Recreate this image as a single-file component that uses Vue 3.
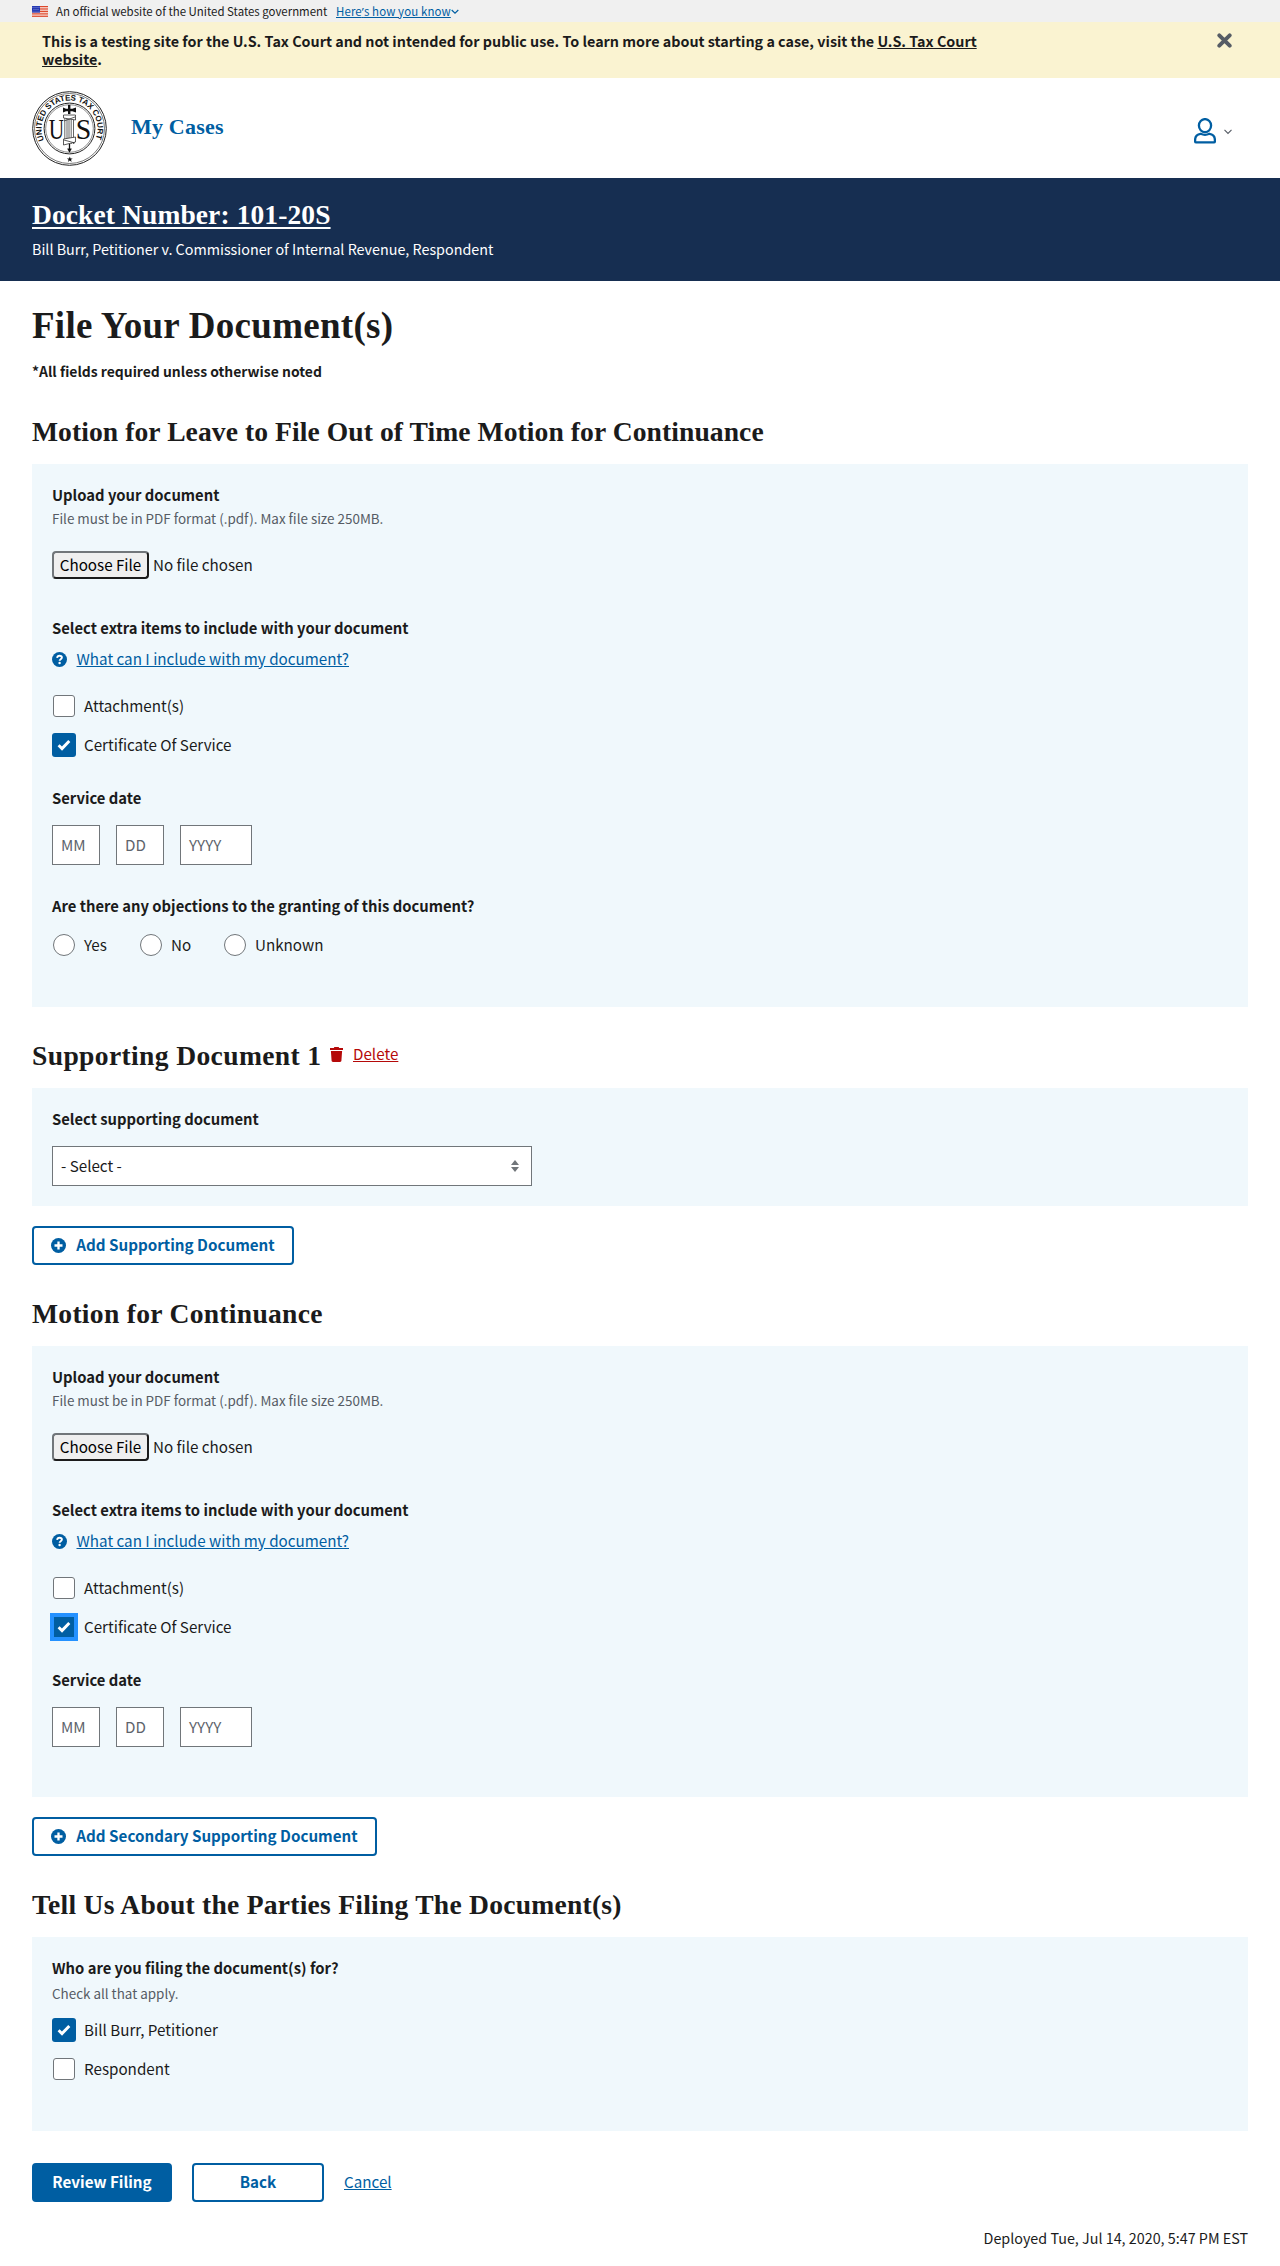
<script setup>
const groups = [
  {
    key: 'primary',
    title: 'Motion for Leave to File Out of Time Motion for Continuance',
    objections: true,
    focused: false,
    supporting: true,
    add: 'Add Supporting Document',
    addClass: 'add-first'
  },
  {
    key: 'secondary',
    title: 'Motion for Continuance',
    objections: false,
    focused: true,
    supporting: false,
    add: 'Add Secondary Supporting Document',
    addClass: 'add-second'
  }
]
const objectionOptions = ['Yes', 'No', 'Unknown']
const parties = [
  { name: 'Bill Burr, Petitioner', checked: true },
  { name: 'Respondent', checked: false }
]
const flagStripes = [0, 2, 4, 6, 8, 10, 12]
</script>

<template>
  <div class="page">
    <div class="gov">
      <svg class="flag" width="16" height="11" viewBox="0 0 16 11">
        <rect width="16" height="11" fill="#fff" />
        <rect v-for="s in flagStripes" :key="s" x="0" :y="s * 0.846" width="16" height="0.95" fill="#db3e1f" />
        <rect width="8" height="6.6" fill="#1e33b1" />
        <g fill="#fff">
          <circle v-for="n in 4" :key="'a' + n" :cx="n * 2 - 1" cy="1.3" r="0.45" />
          <circle v-for="n in 3" :key="'b' + n" :cx="n * 2" cy="3.2" r="0.45" />
          <circle v-for="n in 4" :key="'c' + n" :cx="n * 2 - 1" cy="5.1" r="0.45" />
        </g>
      </svg>
      <span class="gov-text">An official website of the United States government</span>
      <a class="gov-link">Here<span class="apos">’</span>s how you know</a>
      <svg class="gov-chev" width="8" height="6" viewBox="0 0 8 6"><path d="M.7 1 4 4.2 7.3 1" fill="none" stroke="#005ea2" stroke-width="1.2" /></svg>
    </div>

    <div class="notice">
      <p>This is a testing site for the U.S. Tax Court and not intended for public use. To learn more about starting a case, visit the <u>U.S. Tax Court</u><br /><u>website</u>.</p>
      <svg class="close" width="15" height="15" viewBox="0 0 15 15"><path d="M2.3 2.3 12.7 12.7M12.7 2.3 2.3 12.7" stroke="#565c65" stroke-width="3.9" stroke-linecap="round" /></svg>
    </div>

    <header class="header">
      <svg class="seal" width="75" height="75" viewBox="0 0 75 75">
        <defs><path id="seal-arc" d="M12 49A28 28 0 1 1 63 49" /></defs>
        <g fill="none" stroke="#222">
          <circle cx="37.5" cy="37.5" r="36.8" stroke-width="1" />
          <circle cx="37.5" cy="37.5" r="35" stroke-width=".6" />
          <circle cx="37.5" cy="37.5" r="25.4" stroke-width="1" />
          <circle cx="37.5" cy="37.5" r="23.8" stroke-width=".5" />
        </g>
        <text class="seal-ring"><textPath href="#seal-arc" textLength="110">UNITED STATES TAX COURT</textPath></text>
        <text class="seal-letter" x="16.8" y="47.6" textLength="15.500" lengthAdjust="spacingAndGlyphs">U</text>
        <text class="seal-letter" x="43.800" y="47.6" textLength="15.5" lengthAdjust="spacingAndGlyphs">S</text>
        <rect x="31.5" y="23" width="12" height="31" fill="#fff" />
        <path d="M32.8 25v28M35 25v28M37 25v28M39.2 25v28M41.5 25v28" stroke="#555" stroke-width=".9" />
        <path d="M31.5 24h12v5l-12-2zM31.5 48l12-2v5l-12 3zM32 30l11-4M32 49l11 3" fill="#fff" stroke="#333" stroke-width=".8" />
        <path d="M31 16.5l3 1.3h2V14h2.4v3.8h2l3.6-1.3v5l-3.6-1.2h-2V23H36v-2.7h-2l-3 1.2z" fill="#111" />
        <path d="M37.5 53v8M35.8 57.5l1.7 3 1.7-3" stroke="#111" stroke-width="1.3" fill="none" />
        <path d="M37.8 65.5l.8 2h2.1l-1.7 1.3.7 2.1-1.9-1.3-1.9 1.3.7-2.1-1.7-1.3H37z" fill="#111" />
      </svg>
      <a class="my-cases">My Cases</a>
      <svg class="user" width="22" height="26" viewBox="0 0 22 26">
        <g fill="none" stroke="#005ea2" stroke-width="2.3">
          <ellipse cx="11" cy="7.6" rx="6.1" ry="6.5" />
          <path d="M6.6 15.8C3 16.2 1.1 18.8 1.1 22v1.3c0 .7.5 1.1 1.1 1.1h17.6c.6 0 1.1-.4 1.1-1.1V22c0-3.2-1.9-5.8-5.5-6.2-2.6 1.2-6.2 1.2-8.8 0z" />
        </g>
      </svg>
      <svg class="user-chev" width="8" height="6" viewBox="0 0 8 6"><path d="M.5.8 4 4.5 7.5.8" fill="none" stroke="#565c65" stroke-width="1.1" /></svg>
    </header>

    <div class="case">
      <a class="docket">Docket Number: 101-20S</a>
      <p class="caption">Bill Burr, Petitioner v. Commissioner of Internal Revenue, Respondent</p>
    </div>

    <main class="main">
      <h1>File Your Document(s)</h1>
      <p class="required">*All fields required unless otherwise noted</p>

      <template v-for="g in groups" :key="g.key">
        <h2 :class="'h-' + g.key">{{ g.title }}</h2>
        <section class="panel">
          <div class="label">Upload your document</div>
          <div class="hint">File must be in PDF format (.pdf). Max file size 250MB.</div>
          <div class="file"><button class="choose">Choose File</button><span>No file chosen</span></div>
          <div class="label extra">Select extra items to include with your document</div>
          <div class="help">
            <svg width="15" height="15" viewBox="0 0 15 15">
              <circle cx="7.5" cy="7.5" r="7.5" fill="#005ea2" />
              <path d="M5.1 5.8C5.3 4.4 6.3 3.7 7.5 3.7c1.4 0 2.4.8 2.4 1.9 0 1.6-2.3 1.6-2.3 3.2" fill="none" stroke="#fff" stroke-width="1.9" />
              <circle cx="7.6" cy="11" r="1.2" fill="#fff" />
            </svg>
            <a>What can I include with my document?</a>
          </div>
          <div class="checks">
            <label class="option"><span class="box"></span><span class="text">Attachment(s)</span></label>
            <label class="option">
              <span class="box checked" :class="{ focused: g.focused }">
                <svg width="14" height="12" viewBox="0 0 14 12"><path d="M1.6 6.3 5 9.6 12.3 1.9" fill="none" stroke="#fff" stroke-width="2.9" /></svg>
              </span>
              <span class="text">Certificate Of Service</span>
            </label>
          </div>
          <div class="label service">Service date</div>
          <div class="dates">
            <span class="field">MM</span><span class="field">DD</span><span class="field year">YYYY</span>
          </div>
          <template v-if="g.objections">
            <div class="label objections">Are there any objections to the granting of this document?</div>
            <div class="radios">
              <label v-for="o in objectionOptions" :key="o" class="option" :class="'r-' + o.toLowerCase()"><span class="box round"></span><span class="text">{{ o }}</span></label>
            </div>
          </template>
        </section>

        <template v-if="g.supporting">
          <div class="h2-row">
            <h2 class="h-support">Supporting Document 1</h2>
            <svg class="trash" width="13" height="15" viewBox="0 0 13 15"><path d="M0 1.1h3.8L4.4 0h4.2l.6 1.1H13v1.8H0zM.9 3.9h11.2l-.7 9.9c-.1.7-.6 1.2-1.3 1.2H2.9c-.7 0-1.2-.5-1.3-1.2z" fill="#b50909" /></svg>
            <a class="delete">Delete</a>
          </div>
          <section class="panel short">
            <div class="label sel-label">Select supporting document</div>
            <div class="select">
              <span>- Select -</span>
              <svg width="8" height="12" viewBox="0 0 8 12"><path d="M4 0l4 5H0zM0 7h8l-4 5z" fill="#71767a" /></svg>
            </div>
          </section>
        </template>

        <button class="btn outline" :class="g.addClass">
          <svg width="15" height="15" viewBox="0 0 15 15"><circle cx="7.5" cy="7.5" r="7.5" fill="#005ea2" /><path d="M7.5 3.5v8M3.5 7.5h8" stroke="#fff" stroke-width="2.3" /></svg>
          <span>{{ g.add }}</span>
        </button>
      </template>

      <h2 class="h-parties">Tell Us About the Parties Filing The Document(s)</h2>
      <section class="panel parties">
        <div class="label">Who are you filing the document(s) for?</div>
        <div class="hint all">Check all that apply.</div>
        <div class="checks">
          <label v-for="p in parties" :key="p.name" class="option">
            <span class="box" :class="{ checked: p.checked }">
              <svg v-if="p.checked" width="14" height="12" viewBox="0 0 14 12"><path d="M1.6 6.3 5 9.6 12.3 1.9" fill="none" stroke="#fff" stroke-width="2.9" /></svg>
            </span>
            <span class="text">{{ p.name }}</span>
          </label>
        </div>
      </section>

      <div class="actions">
        <button class="btn solid"><span>Review Filing</span></button>
        <button class="btn outline back"><span>Back</span></button>
        <a class="cancel">Cancel</a>
      </div>
      <p class="deployed">Deployed Tue, Jul 14, 2020, 5:47 PM EST</p>
    </main>
  </div>
</template>

<style>
body { margin: 0; background: #fff; }
</style>

<style scoped>
.page {
  width: 1280px;
  height: 2266px;
  overflow: hidden;
  font-family: "Noto Sans CJK SC", "Open Sans", sans-serif;
  font-size: 15.2px;
  line-height: 20px;
  color: #1b1b1b;
  white-space: nowrap;
}
.page * { box-sizing: border-box; }
p, h1, h2 { margin: 0; }
button { font-family: inherit; margin: 0; }
svg { flex: none; display: block; }

.gov {
  height: 22px;
  padding: 0 32px;
  display: flex;
  align-items: center;
  background: #f0f0f0;
  font-size: 11.45px;
}
.flag { margin-top: 1px; }
.gov-text { margin-left: 8px; width: 280px; }
.gov-link { color: #005ea2; text-decoration: underline; width: 113px; letter-spacing: 0.12px; }
.apos { font-family: "Noto Sans", sans-serif; }
.gov-chev { margin: 2px 0 0 2px; }

.notice {
  height: 56px;
  padding: 11px 48px 0 42px;
  display: flex;
  justify-content: space-between;
  background: #faf3d1;
  font-size: 14.33px;
  font-weight: 700;
  line-height: 18px;
}
.notice p { margin-top: -1px; }

.header { height: 100px; padding: 0 48px 0 32px; display: flex; align-items: center; }
.seal-ring { font: 700 8px "Liberation Sans", sans-serif; fill: #111; }
.seal-letter { font: 400 28.5px "Liberation Serif", serif; fill: #111; }
.my-cases {
  margin: 0 auto 3px 24px;
  color: #005ea2;
  font: 700 22px/30px "Liberation Serif", serif;
  letter-spacing: 0.2px;
}
.user { margin-top: 5px; }
.user-chev { margin: 8px 0 0 8px; }

.case { height: 103px; padding: 19px 32px 0; background: #162e51; color: #fff; }
.docket {
  display: block;
  width: max-content;
  font: 700 27.5px/36px "Liberation Serif", serif;
  letter-spacing: 0.1px;
  text-decoration: underline;
  text-decoration-thickness: 2px;
  text-underline-offset: 3px;
}
.caption { margin-top: 6px; font-size: 14.33px; }

.main { padding: 25px 32px 0; }
h1 { font: 700 37px/40px "Liberation Serif", serif; letter-spacing: 0.27px; }
.required { margin-top: 15px; margin-bottom: 33px; font-weight: 600; font-size: 13.93px; }
h2 { font: 700 27.6px/36px "Liberation Serif", serif; letter-spacing: 0.23px; margin: 31px 0 14px; }
.h-primary { margin-top: 0; letter-spacing: 0.07px; }
.h-secondary { letter-spacing: 0.28px; }
.h2-row { display: flex; margin: 31px 0 14px; }
.h2-row h2 { margin: 0; width: 289px; letter-spacing: 0.35px; }
.trash { margin: 9px 10px 0 9px; }
.delete { color: #b50909; text-decoration: underline; margin-top: 5px; }

.panel { background: #f0f8fc; padding: 20px 20px 50px; }
.panel.short { padding-bottom: 20px; }
.label { height: 20px; padding-top: 1px; font-weight: 600; font-size: 14.8px; }
.hint { margin-top: 5px; line-height: 18px; font-size: 13.43px; color: #565c65; }
.file { margin-top: 24px; display: flex; align-items: center; }
.file span { margin-bottom: 2px; }
.choose {
  width: 97px;
  height: 28px;
  padding: 0 0 2px;
  margin-right: 4px;
  border: 2px solid;
  border-color: #71767a #1b1b1b #1b1b1b #71767a;
  border-radius: 4px;
  background: #efefef;
  color: #000;
  font-size: 15.2px;
  line-height: 20px;
}
.extra { margin-top: 38px; }
.help { height: 20px; margin-top: 12px; display: flex; align-items: center; }
.help a, .cancel { color: #005ea2; text-decoration: underline; }
.help a { margin: 0 0 2px 9.5px; }
.checks { margin-top: 25px; display: flex; flex-direction: column; gap: 15px; }
.option { display: flex; align-items: center; height: 24px; }
.text { margin-bottom: 2px; }
.box {
  width: 22px;
  height: 22px;
  margin: 0 9px 0 1px;
  border: 1px solid #71767a;
  border-radius: 3px;
  background: #fff;
  display: flex;
  align-items: center;
  justify-content: center;
}
.box.round { border-radius: 50%; }
.box.checked { width: 24px; height: 24px; margin: 0 8px 0 0; border: 0; background: #005ea2; }
.box.focused { border-radius: 0; box-shadow: inset 0 0 0 2px #2491ff, 0 0 0 2px #2491ff; }
.service { margin-top: 30px; }
.dates { margin-top: 18px; display: flex; gap: 16px; }
.field {
  width: 48px;
  height: 40px;
  padding-left: 8px;
  border: 1px solid #71767a;
  background: #fff;
  color: #5e646c;
  line-height: 37px;
}
.field.year { width: 72px; }
.objections { margin-top: 30px; }
.radios { margin-top: 18px; display: flex; }
.r-yes { width: 87px; }
.r-no { width: 84px; }
.sel-label { margin-bottom: 18px; }
.select {
  width: 480px;
  height: 40px;
  padding: 0 12px 0 8px;
  border: 1px solid #71767a;
  background: #fff;
  display: flex;
  align-items: center;
  justify-content: space-between;
}
.select span { margin-bottom: 2px; }
.btn {
  height: 39px;
  padding: 0 18px;
  border: 2px solid #005ea2;
  border-radius: 4px;
  display: flex;
  align-items: center;
  justify-content: center;
  font-size: 15.2px;
  font-weight: 700;
  line-height: 20px;
}
.btn span { margin-bottom: 3px; }
.outline { background: #fff; color: #005ea2; }
.outline svg { margin-right: 10px; }
.add-first { width: 262px; margin-top: 20px; }
.add-second { width: 345px; margin-top: 20px; }
.solid { width: 140px; background: #005ea2; color: #fff; }
.back { width: 132px; }
.all { margin-top: 7px; }
.parties .checks { margin-top: 16px; }
.actions { margin-top: 32px; display: flex; align-items: center; gap: 20px; }
.cancel { margin-bottom: 3px; }
.deployed { margin-top: 26px; text-align: right; font-size: 14.33px; }
</style>
